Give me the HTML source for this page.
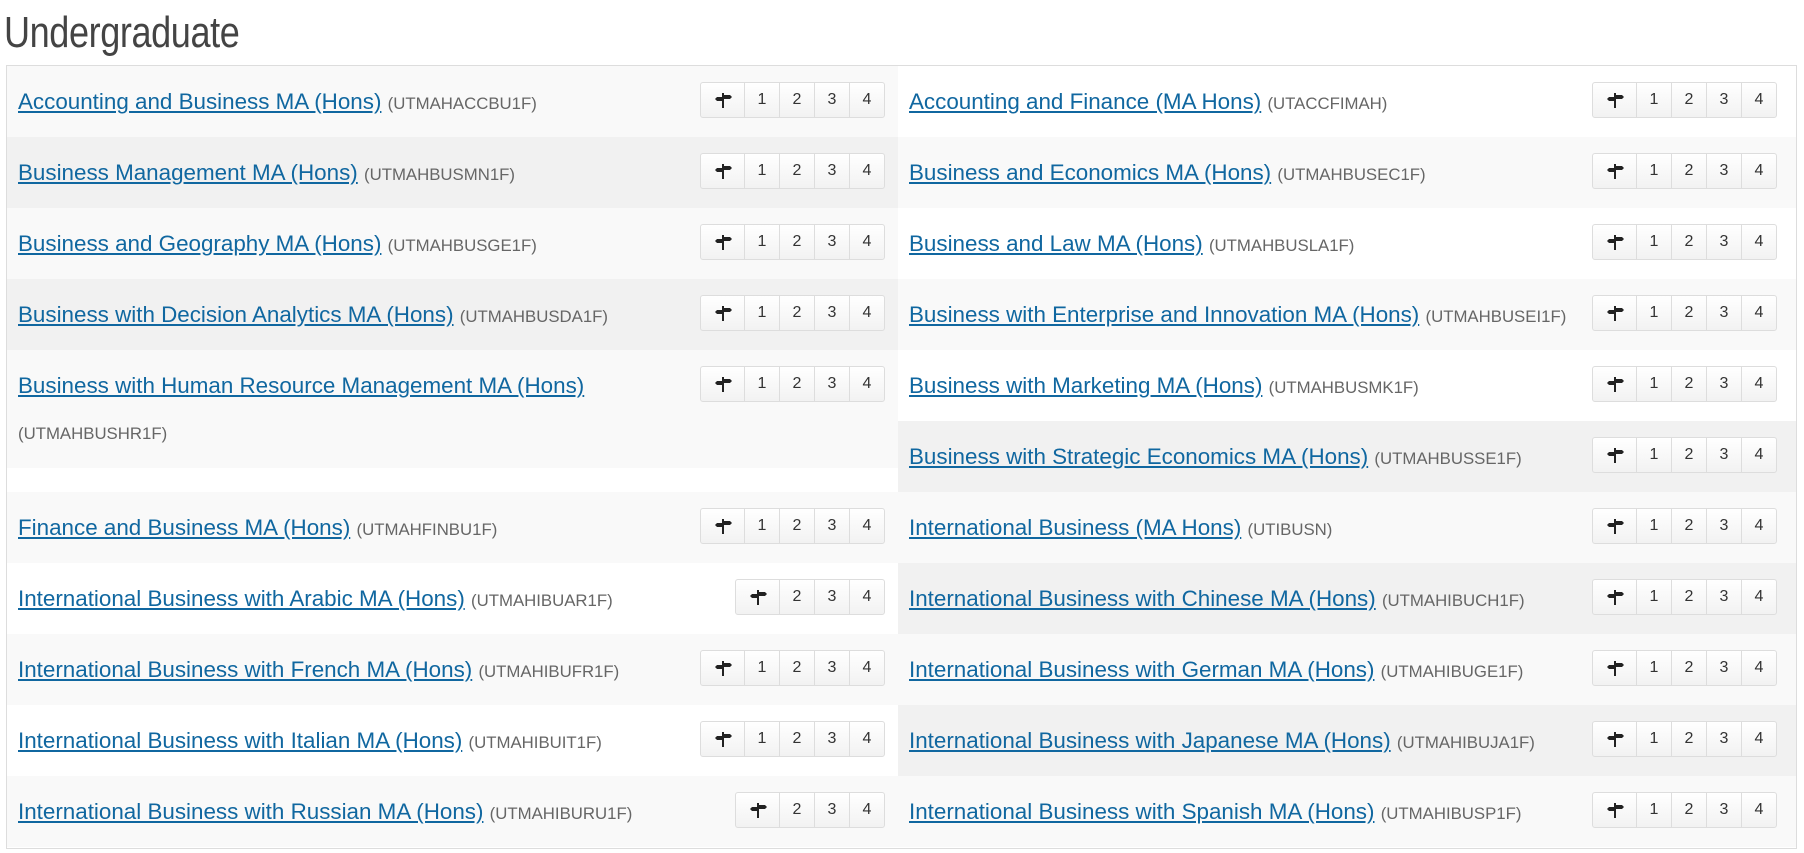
<!DOCTYPE html>
<html><head><meta charset="utf-8"><style>
*{box-sizing:border-box;margin:0;padding:0}
body{width:1804px;height:853px;background:#fff;font-family:"Liberation Sans",sans-serif;position:relative;overflow:hidden}
h1{position:absolute;left:4px;top:8px;font-weight:normal;font-size:44px;color:#444;transform:scaleX(.82);transform-origin:left top;letter-spacing:-.5px}
.box{position:absolute;left:6px;top:65px;width:1791px;height:784px;border:1px solid #ddd}
.r{position:absolute;height:71px}
.l{left:7px;width:891px}
.rt{left:898px;width:898px}
.t{position:absolute;left:11px;top:13px;width:680px;font-size:22.4px;line-height:46px;white-space:nowrap}
.t.w{white-space:normal;width:690px}
.t a{color:#1067a0;text-decoration:underline}
.t span{color:#666;font-size:16.8px}
.g{position:absolute;top:16px;height:36px;display:flex;border:1px solid #ddd;border-radius:3px;background:linear-gradient(#fff,#f2f2f2)}
.l .g{right:13px}.rt .g{right:19px}
.g div{width:35px;border-left:1px solid #ddd;text-align:center;line-height:34px;font-size:16px;color:#333}
.g div:first-child{width:43px;border-left:0;display:flex;align-items:center;justify-content:center}
</style></head><body>
<h1>Undergraduate</h1>
<div class="box"></div>
<div id="c"></div>
<script>
const ic='<svg width="18" height="16" viewBox="0 0 18 16"><rect x="8" y="1" width="2" height="15" fill="#222"/><path d="M10 3h6l2 2-2 2h-6z" fill="#222"/><path d="M8 5H3L1 7l2 2h5z" fill="#222"/></svg>';
function g(n){let s='<div class="g"><div>'+ic+'</div>';const a=n==4?[2,3,4]:[1,2,3,4];a.forEach(x=>s+='<div>'+x+'</div>');return s+'</div>'}
const L=[["Accounting and Business MA (Hons)","UTMAHACCBU1F","#f9f9f9"],["Business Management MA (Hons)","UTMAHBUSMN1F","#f1f1f1"],["Business and Geography MA (Hons)","UTMAHBUSGE1F","#f9f9f9"],["Business with Decision Analytics MA (Hons)","UTMAHBUSDA1F","#f1f1f1"],["Business with Human Resource Management MA (Hons)","UTMAHBUSHR1F","#f9f9f9",1],["Finance and Business MA (Hons)","UTMAHFINBU1F","#f9f9f9"],["International Business with Arabic MA (Hons)","UTMAHIBUAR1F","#fff",0,4],["International Business with French MA (Hons)","UTMAHIBUFR1F","#f9f9f9"],["International Business with Italian MA (Hons)","UTMAHIBUIT1F","#fff"],["International Business with Russian MA (Hons)","UTMAHIBURU1F","#f9f9f9",0,4]];
const R=[["Accounting and Finance (MA Hons)","UTACCFIMAH","#fff"],["Business and Economics MA (Hons)","UTMAHBUSEC1F","#f9f9f9"],["Business and Law MA (Hons)","UTMAHBUSLA1F","#fff"],["Business with Enterprise and Innovation MA (Hons)","UTMAHBUSEI1F","#f9f9f9"],["Business with Marketing MA (Hons)","UTMAHBUSMK1F","#fff"],["Business with Strategic Economics MA (Hons)","UTMAHBUSSE1F","#f1f1f1"],["International Business (MA Hons)","UTIBUSN","#f9f9f9"],["International Business with Chinese MA (Hons)","UTMAHIBUCH1F","#f1f1f1"],["International Business with German MA (Hons)","UTMAHIBUGE1F","#f9f9f9"],["International Business with Japanese MA (Hons)","UTMAHIBUJA1F","#f1f1f1"],["International Business with Spanish MA (Hons)","UTMAHIBUSP1F","#f9f9f9"]];
let h='';
const lt=[66,137,208,279,350,492,563,634,705,776];
L.forEach((r,i)=>{h+=`<div class="r l" style="top:${lt[i]}px;height:${r[3]?118:71}px;background:${r[2]}"><div class="t${r[3]?' w':''}"><a>${r[0]}</a> <span>(${r[1]})</span></div>${g(r[4]||5)}</div>`});
R.forEach((r,i)=>{h+=`<div class="r rt" style="top:${66+71*i}px;background:${r[2]}"><div class="t"><a>${r[0]}</a> <span>(${r[1]})</span></div>${g(5)}</div>`});
document.getElementById('c').innerHTML=h;
</script>
</body></html>
